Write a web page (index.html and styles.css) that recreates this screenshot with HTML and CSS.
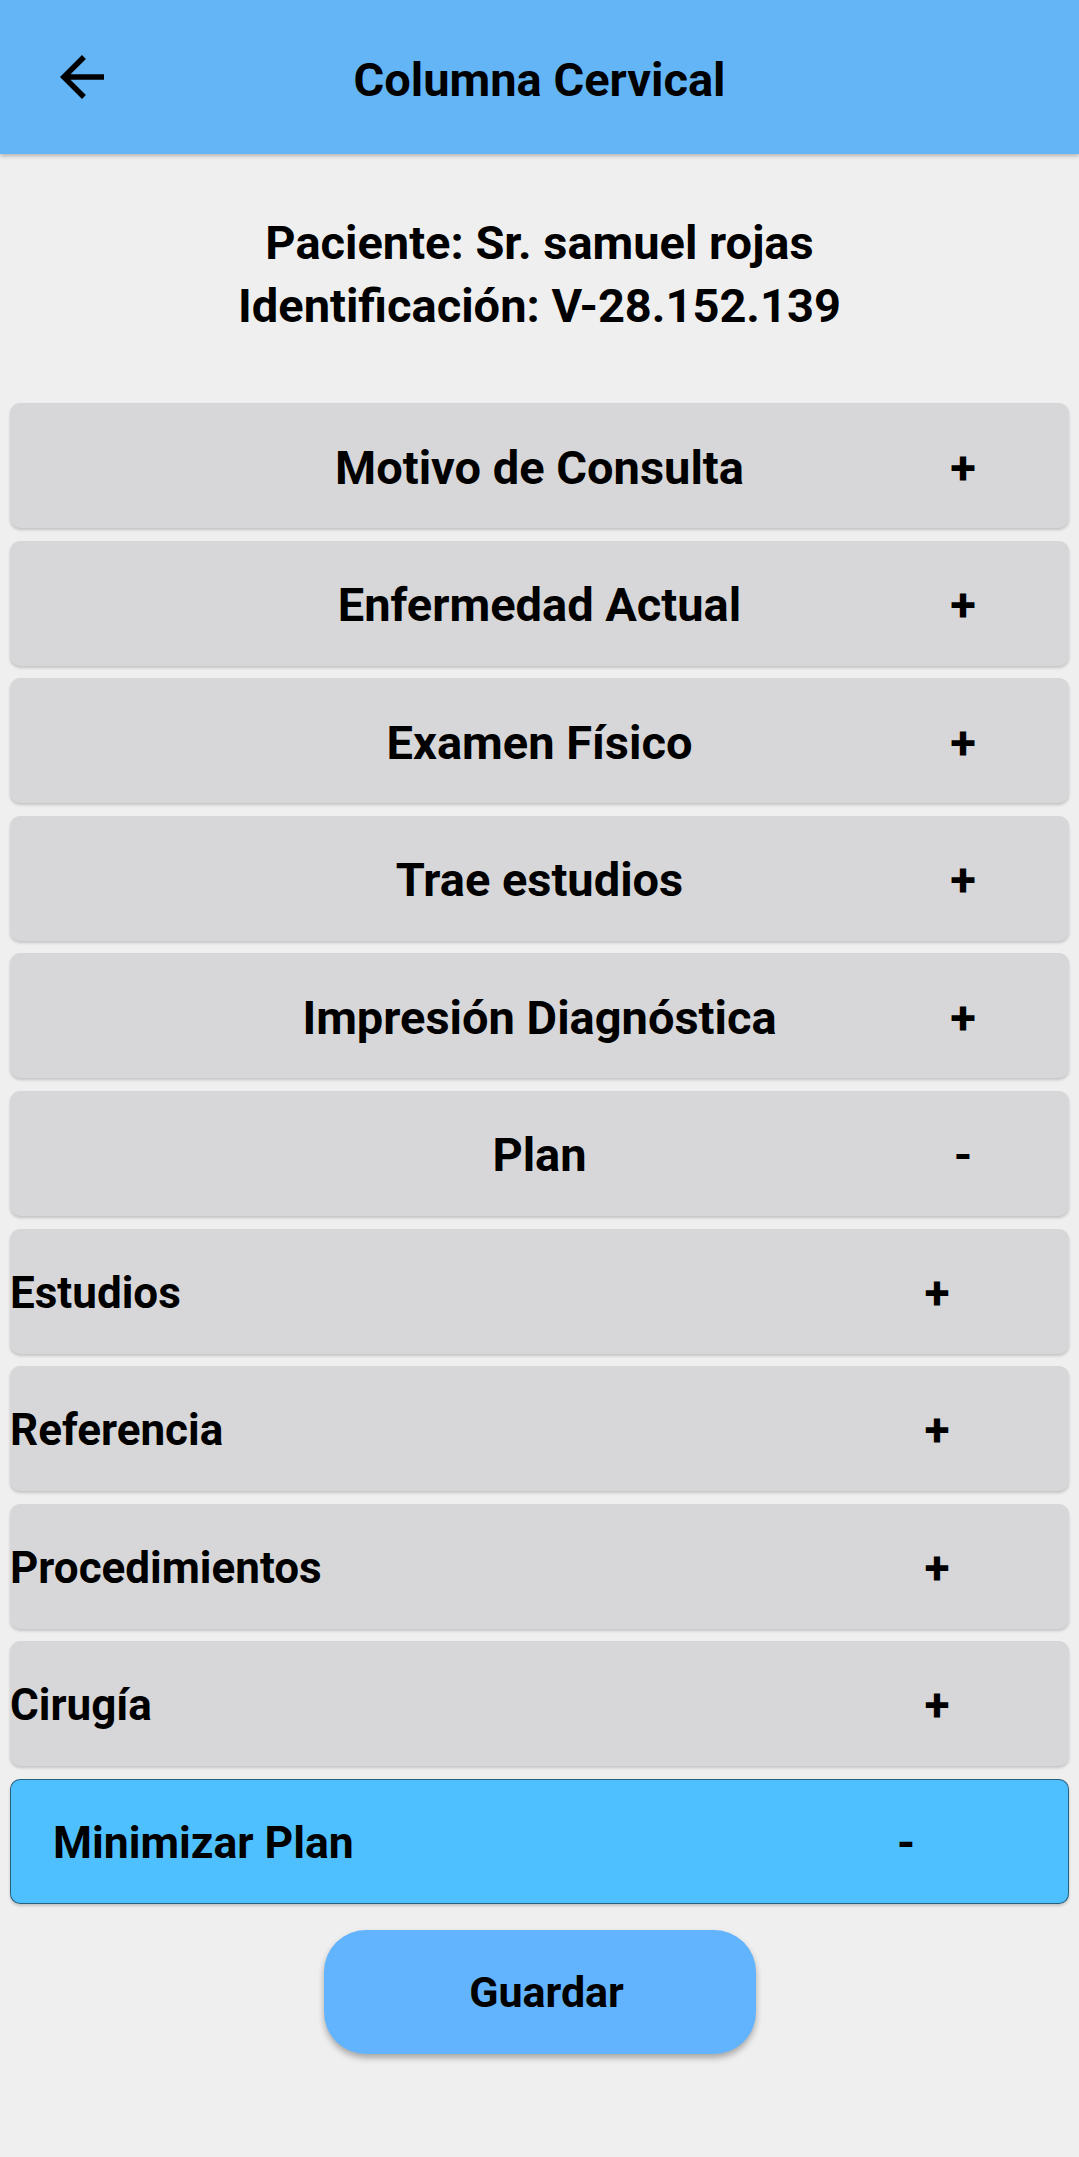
FILE: index.html
```html
<!DOCTYPE html>
<html lang="es">
<head>
<meta charset="utf-8">
<title>Columna Cervical</title>
<link rel="stylesheet" href="styles.css">
</head>
<body>
<header class="appbar">
  <div class="appbar-left">
    <svg class="back" viewBox="0 0 24 24" width="66" height="66" aria-hidden="true"><path d="M20 11H7.83l5.59-5.59L12 4l-8 8 8 8 1.41-1.41L7.83 13H20v-2z" fill="#000"/></svg>
  </div>
  <h1 class="appbar-title">Columna Cervical</h1>
  <div></div>
</header>
<main class="content">
  <div class="patient">
    <div>Paciente: Sr. samuel rojas</div>
    <div>Identificación: V-28.152.139</div>
  </div>
  <div class="list">
    <div class="card centered"><span></span><span class="title">Motivo de Consulta</span><span class="sign">+</span></div>
    <div class="card centered"><span></span><span class="title">Enfermedad Actual</span><span class="sign">+</span></div>
    <div class="card centered"><span></span><span class="title">Examen Físico</span><span class="sign">+</span></div>
    <div class="card centered"><span></span><span class="title">Trae estudios</span><span class="sign">+</span></div>
    <div class="card centered"><span></span><span class="title">Impresión Diagnóstica</span><span class="sign">+</span></div>
    <div class="card centered"><span></span><span class="title">Plan</span><span class="sign">-</span></div>
    <div class="card sub"><span class="title">Estudios</span><span class="sign">+</span></div>
    <div class="card sub"><span class="title">Referencia</span><span class="sign">+</span></div>
    <div class="card sub"><span class="title">Procedimientos</span><span class="sign">+</span></div>
    <div class="card sub"><span class="title">Cirugía</span><span class="sign">+</span></div>
    <div class="card minimize"><span class="title">Minimizar Plan</span><span class="sign">-</span></div>
  </div>
  <div class="actions">
    <button class="save" type="button">Guardar</button>
  </div>
</main>
</body>
</html>
```
FILE: styles.css
```css
* { box-sizing: border-box; }
html, body { margin: 0; padding: 0; }
body {
  background: #efefef;
  font-family: Roboto, "Noto Sans", sans-serif;
  font-weight: 700;
  color: #000;
  min-height: 2157px;
}
.appbar {
  height: 154px;
  background: #64b5f6;
  display: grid;
  grid-template-columns: 1fr auto 1fr;
  align-items: center;
  box-shadow: 0 2px 4px rgba(0,0,0,0.25);
  position: relative;
  z-index: 1;
}
.appbar-left { display: flex; align-items: center; padding-left: 49px; }
.back { display: block; }
.appbar-title {
  margin: 0;
  font-size: 47px;
  font-weight: 700;
  padding-top: 5px;
}
.content { display: flex; flex-direction: column; }
.patient {
  margin-top: 57px;
  text-align: center;
  font-size: 47px;
  line-height: 63px;
}
.list {
  margin: 66px 10px 0;
  display: flex;
  flex-direction: column;
  gap: 12.6px;
}
.card {
  height: 125px;
  background: #d7d7d9;
  border-radius: 10px;
  box-shadow: 0 2px 3px rgba(0,0,0,0.18);
  font-size: 47px;
  align-items: center;
  padding-top: 3px;
}
.card.centered {
  display: grid;
  grid-template-columns: 1fr auto 1fr;
}
.card.centered .sign {
  justify-self: end;
  width: 50px;
  text-align: center;
  margin-right: 81px;
}
.card.sub {
  display: flex;
  justify-content: space-between;
  font-size: 44px;
}
.card.sub .sign {
  width: 50px;
  text-align: center;
  margin-right: 107px;
  font-size: 46px;
}
.card.minimize {
  display: flex;
  justify-content: space-between;
  background: #4fc0ff;
  border: 1px solid rgba(0,0,0,0.5);
  padding-left: 42px;
  font-size: 44.5px;
}
.card.minimize .sign {
  width: 50px;
  text-align: center;
  margin-right: 137px;
  font-size: 46px;
}
.actions {
  display: flex;
  justify-content: center;
  margin-top: 26px;
}
.save {
  width: 432px;
  height: 124px;
  border: none;
  border-radius: 42px;
  background: #62b4fe;
  font-family: Roboto, "Noto Sans", sans-serif;
  font-weight: 700;
  font-size: 43px;
  color: #000;
  box-shadow: 0 4px 6px rgba(0,0,0,0.3);
  padding: 0 0 0 14px;
}
```
